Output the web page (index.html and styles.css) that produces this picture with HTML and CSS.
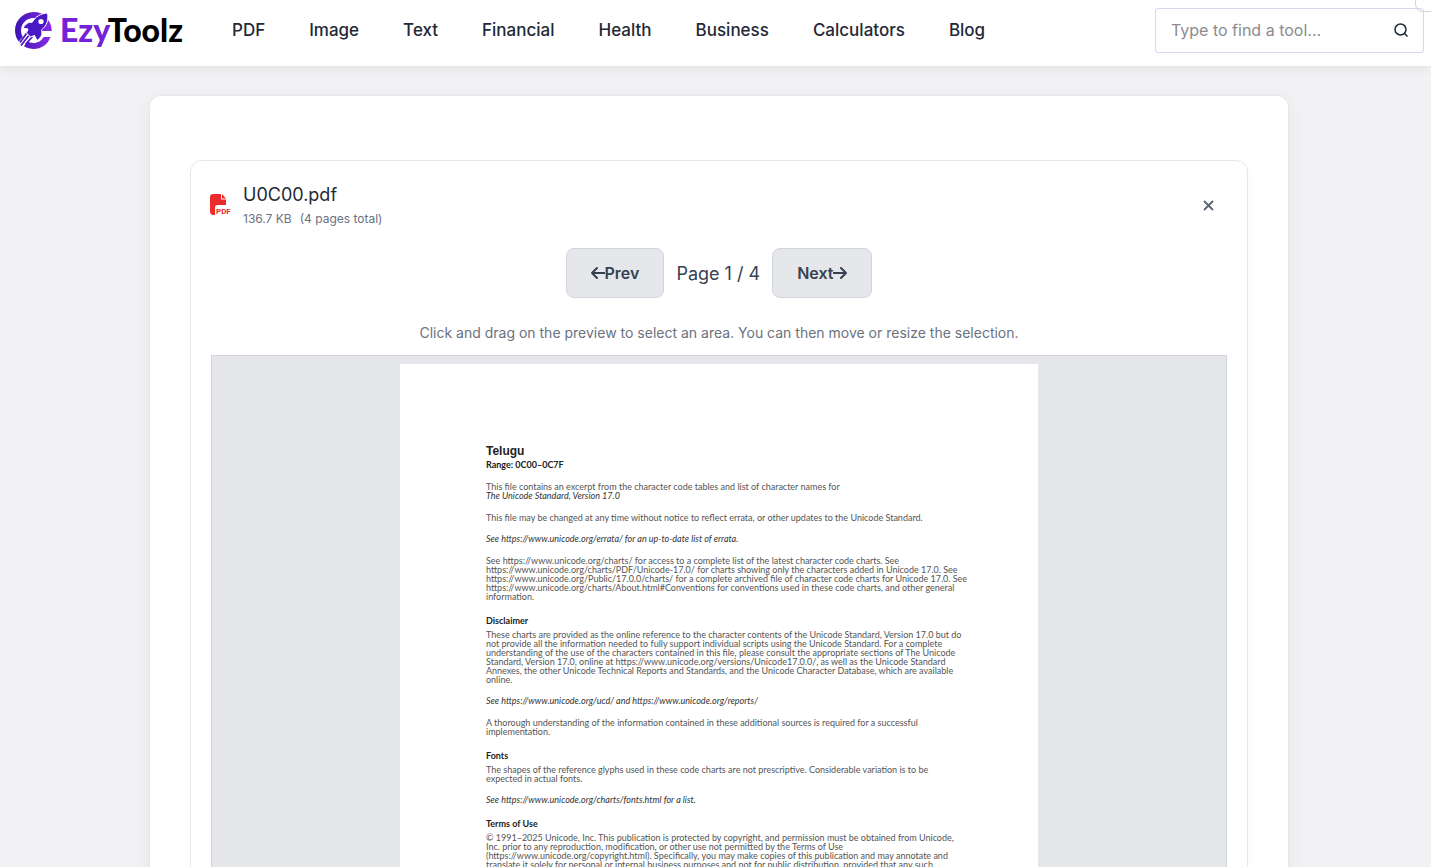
FILE: index.html
```html
<!DOCTYPE html>
<html lang="en">
<head>
    <meta charset="UTF-8">
    <meta name="viewport" content="width=device-width, initial-scale=1.0">
    <title>EzyToolz</title>
    <link rel="stylesheet" href="styles.css">
</head>
<body>
    <header class="header">
        <a href="#" class="logo">
            <svg class="logo-icon" viewBox="0 0 37 37" aria-hidden="true">
                <defs>
                    <linearGradient id="brand" x1="0" y1="0" x2="1" y2="0">
                        <stop offset="0" stop-color="#3c14b4"/>
                        <stop offset="1" stop-color="#8b2be8"/>
                    </linearGradient>
                </defs>
                <!-- ring -->
                <path fill="url(#brand)" d="M18.500 0C24 0 28 1.800 31 5L33 8C35.500 11 36.700 14.500 36.700 19H22l2-4h6C28.500 9.500 24 6 18.500 6 11.500 6 6 11.500 6 18.500 6 25.500 11.500 31 18.500 31c4.500 0 8-2.300 10.200-6H35.500C33 32.200 26.500 37 18.500 37 8.300 37 0 28.700 0 18.500S8.300 0 18.500 0z"/>
                <!-- exhaust -->
                <path stroke="#fff" stroke-width="7" d="M15 22L3.500 35"/>
                <path stroke="#4a18c4" stroke-width="1.800" d="M12.500 20L5 30.500M15 22L6 33.500M17.500 24.500L10.500 32.500"/>
                <!-- rocket -->
                <path fill="#4a18c4" stroke="#fff" stroke-width="1" d="M32.500 1C26 1.300 20.500 4.600 17 10.500 13.500 9.800 10.500 11.800 8 16.200L13 17l-1.500 4 4 4 4-1.500L22 28.500c4.500-3 5.700-6.500 4.500-10.500C32 13.300 33.800 8 32.500 1z"/>
                <circle cx="26" cy="9.500" r="2.600" fill="#fff"/>
            </svg>
            <span class="logo-text"><span class="logo-accent">Ezy</span>Toolz</span>
        </a>
        <nav class="nav">
            <a href="#">PDF</a>
            <a href="#">Image</a>
            <a href="#">Text</a>
            <a href="#">Financial</a>
            <a href="#">Health</a>
            <a href="#">Business</a>
            <a href="#">Calculators</a>
            <a href="#">Blog</a>
        </nav>
        <form class="search">
            <input type="text" placeholder="Type to find a tool..." aria-label="Type to find a tool">
            <button type="submit" aria-label="Search">
                <svg width="14" height="14" viewBox="0 0 14 14" fill="none" stroke="#1f2937" stroke-width="1.500">
                    <circle cx="6.500" cy="6.500" r="5.500"/>
                    <path d="M10.500 10.500L13.500 13.500"/>
                </svg>
            </button>
        </form>
        <div class="corner-tab"></div>
    </header>

    <main class="main">
        <section class="tool">
            <div class="file-card">
                <div class="file-header">
                    <svg class="file-icon" viewBox="0 0 22 22" aria-hidden="true">
                        <path fill="#ee2b2b" d="M2 0h8v5.500h5V11H6.500C5 11 4 12 4 13.500V21H2.500C1 21 -1 20 -1 18V3C-1 1.200 0.300 0 2 0zM11 0l4 4.500h-4z"/>
                        <text x="5" y="20" class="file-icon-label">PDF</text>
                    </svg>
                    <div class="file-info">
                        <div class="file-name">U0C00.pdf</div>
                        <div class="file-meta"><span>136.7 KB</span><span>(4 pages total)</span></div>
                    </div>
                    <button class="remove-btn" type="button" aria-label="Remove file">
                        <svg width="11" height="11" viewBox="0 0 11 11" fill="none" stroke="#5b6472" stroke-width="1.800">
                            <path d="M1 1L10 10M10 1L1 10"/>
                        </svg>
                    </button>
                </div>

                <div class="pager">
                    <button class="pager-btn" type="button">
                        <svg width="14" height="14" viewBox="0 0 14 14" fill="none" stroke="currentColor" stroke-width="2" stroke-linecap="round" stroke-linejoin="round">
                            <path d="M13.500 7H1M6 2L1 7L6 12"/>
                        </svg>Prev
                    </button>
                    <span class="pager-label">Page 1 / 4</span>
                    <button class="pager-btn" type="button">
                        Next<svg width="14" height="14" viewBox="0 0 14 14" fill="none" stroke="currentColor" stroke-width="2" stroke-linecap="round" stroke-linejoin="round">
                            <path d="M0.500 7H13M8 2L13 7L8 12"/>
                        </svg>
                    </button>
                </div>

                <p class="hint">Click and drag on the preview to select an area. You can then move or resize the selection.</p>

                <div class="preview">
                    <article class="paper">
                        <h1>Telugu</h1>
                        <h2>Range: 0C00–0C7F</h2>
                        <p>This file contains an excerpt from the character code tables and list of character names for<br>
                            <em>The Unicode Standard, Version 17.0</em></p>
                        <p>This file may be changed at any time without notice to reflect errata, or other updates to the Unicode Standard.</p>
                        <p class="see">See https://www.unicode.org/errata/ for an up-to-date list of errata.</p>
                        <p>See https://www.unicode.org/charts/ for access to a complete list of the latest character code charts. See<br>
                            https://www.unicode.org/charts/PDF/Unicode-17.0/ for charts showing only the characters added in Unicode 17.0. See<br>
                            https://www.unicode.org/Public/17.0.0/charts/ for a complete archived file of character code charts for Unicode 17.0. See<br>
                            https://www.unicode.org/charts/About.html#Conventions for conventions used in these code charts, and other general<br>
                            information.</p>
                        <h3>Disclaimer</h3>
                        <p>These charts are provided as the online reference to the character contents of the Unicode Standard, Version 17.0 but do<br>
                            not provide all the information needed to fully support individual scripts using the Unicode Standard. For a complete<br>
                            understanding of the use of the characters contained in this file, please consult the appropriate sections of The Unicode<br>
                            Standard, Version 17.0, online at https://www.unicode.org/versions/Unicode17.0.0/, as well as the Unicode Standard<br>
                            Annexes, the other Unicode Technical Reports and Standards, and the Unicode Character Database, which are available<br>
                            online.</p>
                        <p class="see">See https://www.unicode.org/ucd/ and https://www.unicode.org/reports/</p>
                        <p>A thorough understanding of the information contained in these additional sources is required for a successful<br>
                            implementation.</p>
                        <h3>Fonts</h3>
                        <p>The shapes of the reference glyphs used in these code charts are not prescriptive. Considerable variation is to be<br>
                            expected in actual fonts.</p>
                        <p class="see">See https://www.unicode.org/charts/fonts.html for a list.</p>
                        <h3>Terms of Use</h3>
                        <p>© 1991–2025 Unicode, Inc. This publication is protected by copyright, and permission must be obtained from Unicode,<br>
                            Inc. prior to any reproduction, modification, or other use not permitted by the Terms of Use<br>
                            (https://www.unicode.org/copyright.html). Specifically, you may make copies of this publication and may annotate and<br>
                            translate it solely for personal or internal business purposes and not for public distribution, provided that any such</p>
                    </article>
                </div>
            </div>
        </section>
    </main>
</body>
</html>
```
FILE: styles.css
```css
* {
    box-sizing: border-box;
}

body {
    margin: 0;
    height: 100vh;
    overflow: hidden;
    background: #f2f2f4;
    font-family: Inter, sans-serif;
    color: #1f2937;
}

.header {
    position: relative;
    display: flex;
    align-items: center;
    padding: 8px 7px 13px 15px;
    background: #fff;
    box-shadow: 0 2px 10px rgba(0, 0, 0, 0.08);
}

.logo {
    display: flex;
    align-items: center;
    gap: 8px;
    width: 217px;
    text-decoration: none;
}

.logo-icon {
    width: 37px;
    height: 37px;
}

.logo-text {
    padding-bottom: 2px;
    font-family: Lato, sans-serif;
    font-size: 32px;
    font-weight: 900;
    line-height: 36px;
    color: #000;
}

.logo-accent {
    color: #7422d8;
}

.nav {
    display: flex;
    gap: 44px;
    flex: 1;
    padding-bottom: 2px;
}

.nav a {
    font-size: 17px;
    font-weight: 500;
    color: #1f2937;
    text-decoration: none;
}

.search {
    display: flex;
    align-items: center;
    width: 269px;
    height: 45px;
    padding: 0 15px 2px;
    border: 1px solid #d9d5f3;
    border-radius: 3px;
}

.search input {
    flex: 1;
    min-width: 0;
    padding: 0;
    border: none;
    outline: none;
    background: none;
    font: 16px Inter, sans-serif;
}

.search input::placeholder {
    color: #8b8b90;
}

.search button,
.remove-btn {
    display: flex;
    padding: 0;
    border: none;
    background: none;
    cursor: pointer;
}

.corner-tab {
    position: absolute;
    top: 0;
    right: 0;
    width: 16px;
    height: 12px;
    border: 1px solid #d4d4d8;
    border-width: 0 0 1px 1px;
    border-bottom-left-radius: 8px;
}

.main {
    padding: 29px 142px 0 149px;
}

.tool {
    padding: 64px 40px;
    background: #fff;
    border: 1px solid #e5e7eb;
    border-radius: 12px;
    box-shadow: 0 4px 20px rgba(0, 0, 0, 0.05);
}

.file-card {
    padding: 20px;
    border: 1px solid #e5e7eb;
    border-radius: 12px;
    box-shadow: 0 2px 8px rgba(0, 0, 0, 0.03);
}

.file-header {
    display: flex;
    align-items: center;
    gap: 10px;
    padding-right: 13px;
}

.file-icon {
    width: 22px;
    height: 22px;
    overflow: visible;
}

.file-icon-label {
    fill: #ee2b2b;
    font-family: Roboto, sans-serif;
    font-size: 8px;
    font-weight: 700;
}

.file-info {
    flex: 1;
}

.file-name {
    font-size: 18px;
    line-height: 27px;
}

.file-meta {
    display: flex;
    gap: 8px;
    font-size: 12px;
    line-height: 21px;
    color: #6b7280;
}

.pager {
    display: flex;
    justify-content: center;
    align-items: center;
    gap: 12px;
    margin-top: 19px;
}

.pager-btn {
    display: flex;
    align-items: center;
    height: 50px;
    padding: 0 24px;
    border: 1px solid #d1d5db;
    border-radius: 8px;
    background: #e5e7eb;
    color: #374151;
    font: 600 16px Inter, sans-serif;
    cursor: pointer;
}

.pager-label {
    font-size: 18px;
    color: #374151;
}

.hint {
    margin: 24px 0 11px;
    font-size: 14px;
    line-height: 22px;
    text-align: center;
    color: #6b7280;
}

.preview {
    padding: 8px;
    border: 1px solid #d1d5db;
    background: #e5e7eb;
}

.paper {
    max-width: 638px;
    min-height: 825px;
    margin: 0 auto;
    padding: 79px 86px;
    background: #fff;
    color: #555;
    font-family: Lato, sans-serif;
    font-size: 9px;
    line-height: 9px;
    white-space: nowrap;
}

.paper h1,
.paper h2,
.paper h3 {
    margin: 0;
    color: #222;
    font-size: 9px;
    line-height: 9px;
}

.paper h1 {
    font-family: "Liberation Sans", sans-serif;
    font-size: 12px;
    line-height: 16px;
}

.paper h2 {
    margin-top: 1px;
}

.paper h3 {
    margin-top: 15px;
}

.paper p {
    margin: 13px 0 0;
}

.paper h3 + p {
    margin-top: 5px;
}

.paper .see {
    margin-top: 12px;
}

.paper .see,
.paper em {
    font-style: italic;
    color: #333;
}
```
